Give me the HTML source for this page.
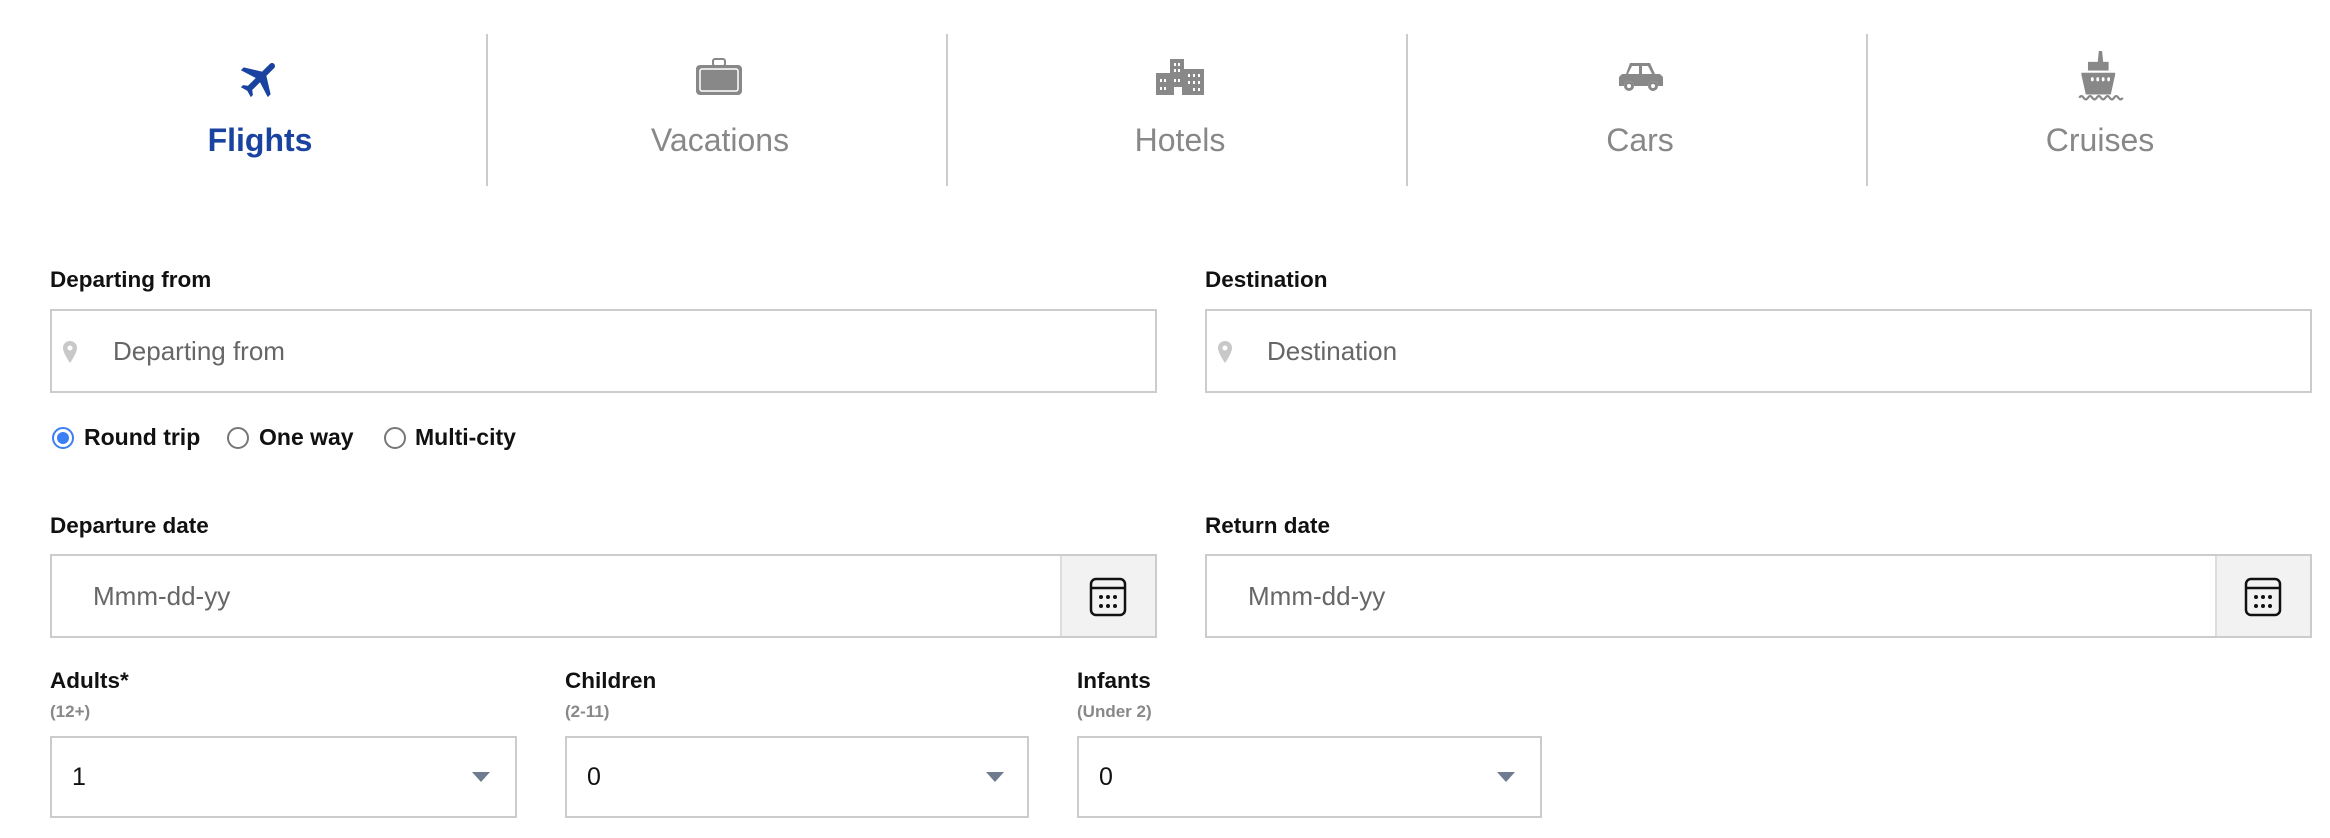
<!DOCTYPE html>
<html><head><meta charset="utf-8"><style>
body{margin:0;width:2330px;height:838px;background:#fff;font-family:"Liberation Sans",Arial,sans-serif;position:relative;overflow:hidden}
.a{position:absolute}
.div{position:absolute;top:34px;height:152px;width:2px;background:#ccc}
.tl{position:absolute;top:122px;width:460px;text-align:center;font-size:32px;color:#888}
.lbl{position:absolute;font-size:22.5px;font-weight:bold;color:#111}
.box{position:absolute;border:2px solid #ccc;box-sizing:border-box;background:#fff}
.ph{position:absolute;font-size:26px;color:#666}
.sub{position:absolute;font-size:17px;font-weight:bold;color:#888}
.val{position:absolute;font-size:25px;color:#111}
.tri{position:absolute;width:0;height:0;border-left:9px solid transparent;border-right:9px solid transparent;border-top:10px solid #6f7b8f}
.rad{position:absolute;top:427px;width:22px;height:22px;border:2px solid #777;border-radius:50%;box-sizing:border-box}
.rt{position:absolute;top:424px;font-size:23px;font-weight:bold;color:#111}
</style></head><body>

<div class="div" style="left:486px"></div>
<div class="div" style="left:946px"></div>
<div class="div" style="left:1406px"></div>
<div class="div" style="left:1866px"></div>

<svg class="a" style="left:236px;top:54px" width="48" height="48" viewBox="0 0 24 24"><g transform="rotate(45 12 12)"><path fill="#1a43a0" d="M21 16v-2l-8-5V3.5C13 2.7 12.3 2 11.5 2S10 2.7 10 3.5V9l-8 5v2l8-2.5V19l-2 1.5V22l3.5-1 3.5 1v-1.5L13 19v-5.5z" transform="translate(0.5 0)"/></g></svg>
<div class="tl" style="left:30px;color:#1a43a0;font-weight:bold">Flights</div>

<svg class="a" style="left:695px;top:58px" width="48" height="38" viewBox="0 0 48 38"><rect x="18" y="1" width="12" height="7" rx="2" fill="none" stroke="#888" stroke-width="2"/><rect x="1" y="7" width="46" height="30" rx="4" fill="#888"/><rect x="5" y="11" width="38" height="22" rx="2" fill="none" stroke="#fff" stroke-width="1.5"/></svg>
<div class="tl" style="left:490px">Vacations</div>

<svg class="a" style="left:1156px;top:59px" width="48" height="36" viewBox="0 0 48 36"><rect x="14" y="0" width="14" height="36" fill="#888"/><rect x="0" y="14" width="48" height="22" fill="#888"/><rect x="28" y="10" width="20" height="26" fill="#888"/><g fill="#fff"><rect x="18" y="4" width="2" height="3"/><rect x="22" y="4" width="2" height="3"/><rect x="18" y="10" width="2" height="3"/><rect x="22" y="10" width="2" height="3"/><rect x="4" y="20" width="2" height="3"/><rect x="8" y="20" width="2" height="3"/><rect x="18" y="20" width="2" height="3"/><rect x="22" y="20" width="2" height="3"/><rect x="32" y="15" width="2" height="3"/><rect x="37" y="15" width="2" height="3"/><rect x="42" y="15" width="2" height="3"/><rect x="32" y="22" width="2" height="3"/><rect x="37" y="22" width="2" height="3"/><rect x="42" y="22" width="2" height="3"/><rect x="4" y="28" width="2" height="3"/><rect x="8" y="28" width="2" height="3"/><rect x="37" y="29" width="2" height="3"/><rect x="42" y="29" width="2" height="3"/><rect x="18" y="28" width="8" height="8"/></g></svg>
<div class="tl" style="left:950px">Hotels</div>

<svg class="a" style="left:1617px;top:62px" width="48" height="30" viewBox="0 0 48 30"><path fill="#888" d="M13 1h20l5 11h5l3 3v9H41a5 5 0 0 0-10 0H17a5 5 0 0 0-10 0H2v-9l3-3h4z"/><path fill="#fff" d="M15 4h7v8H11zM25 4h6l4 8H25z"/><circle cx="12" cy="24" r="5" fill="#888"/><circle cx="36" cy="24" r="5" fill="#888"/><circle cx="12" cy="24" r="2" fill="#fff"/><circle cx="36" cy="24" r="2" fill="#fff"/></svg>
<div class="tl" style="left:1410px">Cars</div>

<svg class="a" style="left:2074px;top:51px" width="54" height="50" viewBox="0 0 48 46"><path fill="#888" d="M22 0h3l1 10h5v8h6v4l-4 18H10L6 22v-4h6v-8h9z"/><rect x="6" y="18" width="36" height="2" fill="#fff"/><g fill="#fff"><ellipse cx="16" cy="26" rx="1.3" ry="2"/><ellipse cx="21" cy="26" rx="1.3" ry="2"/><ellipse cx="26" cy="26" rx="1.3" ry="2"/><ellipse cx="31" cy="26" rx="1.3" ry="2"/></g><path d="M4 43q2-3 4 0t4 0 4 0 4 0 4 0 4 0 4 0 4 0 4 0 4 0" fill="none" stroke="#888" stroke-width="2"/></svg>
<div class="tl" style="left:1870px">Cruises</div>

<div class="lbl" style="left:50px;top:267px">Departing from</div>
<div class="lbl" style="left:1205px;top:267px">Destination</div>
<div class="box" style="left:50px;top:309px;width:1107px;height:84px"></div>
<div class="box" style="left:1205px;top:309px;width:1107px;height:84px"></div>
<svg class="a" style="left:62px;top:341px" width="16" height="22" viewBox="0 0 16 22"><path fill="#c8c8c8" d="M8 0a7 7 0 0 1 7 7c0 5-7 15-7 15S1 12 1 7a7 7 0 0 1 7-7z"/><circle cx="8" cy="7" r="2.5" fill="#fff"/></svg>
<svg class="a" style="left:1217px;top:341px" width="16" height="22" viewBox="0 0 16 22"><path fill="#c8c8c8" d="M8 0a7 7 0 0 1 7 7c0 5-7 15-7 15S1 12 1 7a7 7 0 0 1 7-7z"/><circle cx="8" cy="7" r="2.5" fill="#fff"/></svg>
<div class="ph" style="left:113px;top:336px">Departing from</div>
<div class="ph" style="left:1267px;top:336px">Destination</div>

<div class="rad" style="left:52px;border-color:#3b7ff5"><div style="position:absolute;left:3px;top:3px;width:12px;height:12px;border-radius:50%;background:#3b7ff5"></div></div>
<div class="rt" style="left:84px">Round trip</div>
<div class="rad" style="left:227px"></div>
<div class="rt" style="left:259px">One way</div>
<div class="rad" style="left:384px"></div>
<div class="rt" style="left:415px">Multi-city</div>

<div class="lbl" style="left:50px;top:513px">Departure date</div>
<div class="lbl" style="left:1205px;top:513px">Return date</div>
<div class="box" style="left:50px;top:554px;width:1107px;height:84px"></div>
<div class="box" style="left:1205px;top:554px;width:1107px;height:84px"></div>
<div class="a" style="left:1060px;top:556px;width:93px;height:80px;background:#f2f2f2;border-left:2px solid #ddd"></div>
<div class="a" style="left:2215px;top:556px;width:93px;height:80px;background:#f2f2f2;border-left:2px solid #ddd"></div>
<div class="ph" style="left:93px;top:581px">Mmm-dd-yy</div>
<div class="ph" style="left:1248px;top:581px">Mmm-dd-yy</div>
<svg class="a" style="left:1089px;top:577px" width="38" height="40" viewBox="0 0 38 40"><rect x="2" y="2" width="34" height="36" rx="5" fill="none" stroke="#111" stroke-width="2.5"/><line x1="2" y1="11" x2="36" y2="11" stroke="#111" stroke-width="2.5"/><g fill="#111"><circle cx="12" cy="20" r="2"/><circle cx="19" cy="20" r="2"/><circle cx="26" cy="20" r="2"/><circle cx="12" cy="29" r="2"/><circle cx="19" cy="29" r="2"/><circle cx="26" cy="29" r="2"/></g></svg>
<svg class="a" style="left:2244px;top:577px" width="38" height="40" viewBox="0 0 38 40"><rect x="2" y="2" width="34" height="36" rx="5" fill="none" stroke="#111" stroke-width="2.5"/><line x1="2" y1="11" x2="36" y2="11" stroke="#111" stroke-width="2.5"/><g fill="#111"><circle cx="12" cy="20" r="2"/><circle cx="19" cy="20" r="2"/><circle cx="26" cy="20" r="2"/><circle cx="12" cy="29" r="2"/><circle cx="19" cy="29" r="2"/><circle cx="26" cy="29" r="2"/></g></svg>

<div class="lbl" style="left:50px;top:668px">Adults*</div>
<div class="lbl" style="left:565px;top:668px">Children</div>
<div class="lbl" style="left:1077px;top:668px">Infants</div>
<div class="sub" style="left:50px;top:702px">(12+)</div>
<div class="sub" style="left:565px;top:702px">(2-11)</div>
<div class="sub" style="left:1077px;top:702px">(Under 2)</div>
<div class="box" style="left:50px;top:736px;width:467px;height:82px"></div>
<div class="box" style="left:565px;top:736px;width:464px;height:82px"></div>
<div class="box" style="left:1077px;top:736px;width:465px;height:82px"></div>
<div class="val" style="left:72px;top:763px">1</div>
<div class="val" style="left:587px;top:763px">0</div>
<div class="val" style="left:1099px;top:763px">0</div>
<div class="tri" style="left:472px;top:772px"></div>
<div class="tri" style="left:986px;top:772px"></div>
<div class="tri" style="left:1497px;top:772px"></div>
</body></html>
